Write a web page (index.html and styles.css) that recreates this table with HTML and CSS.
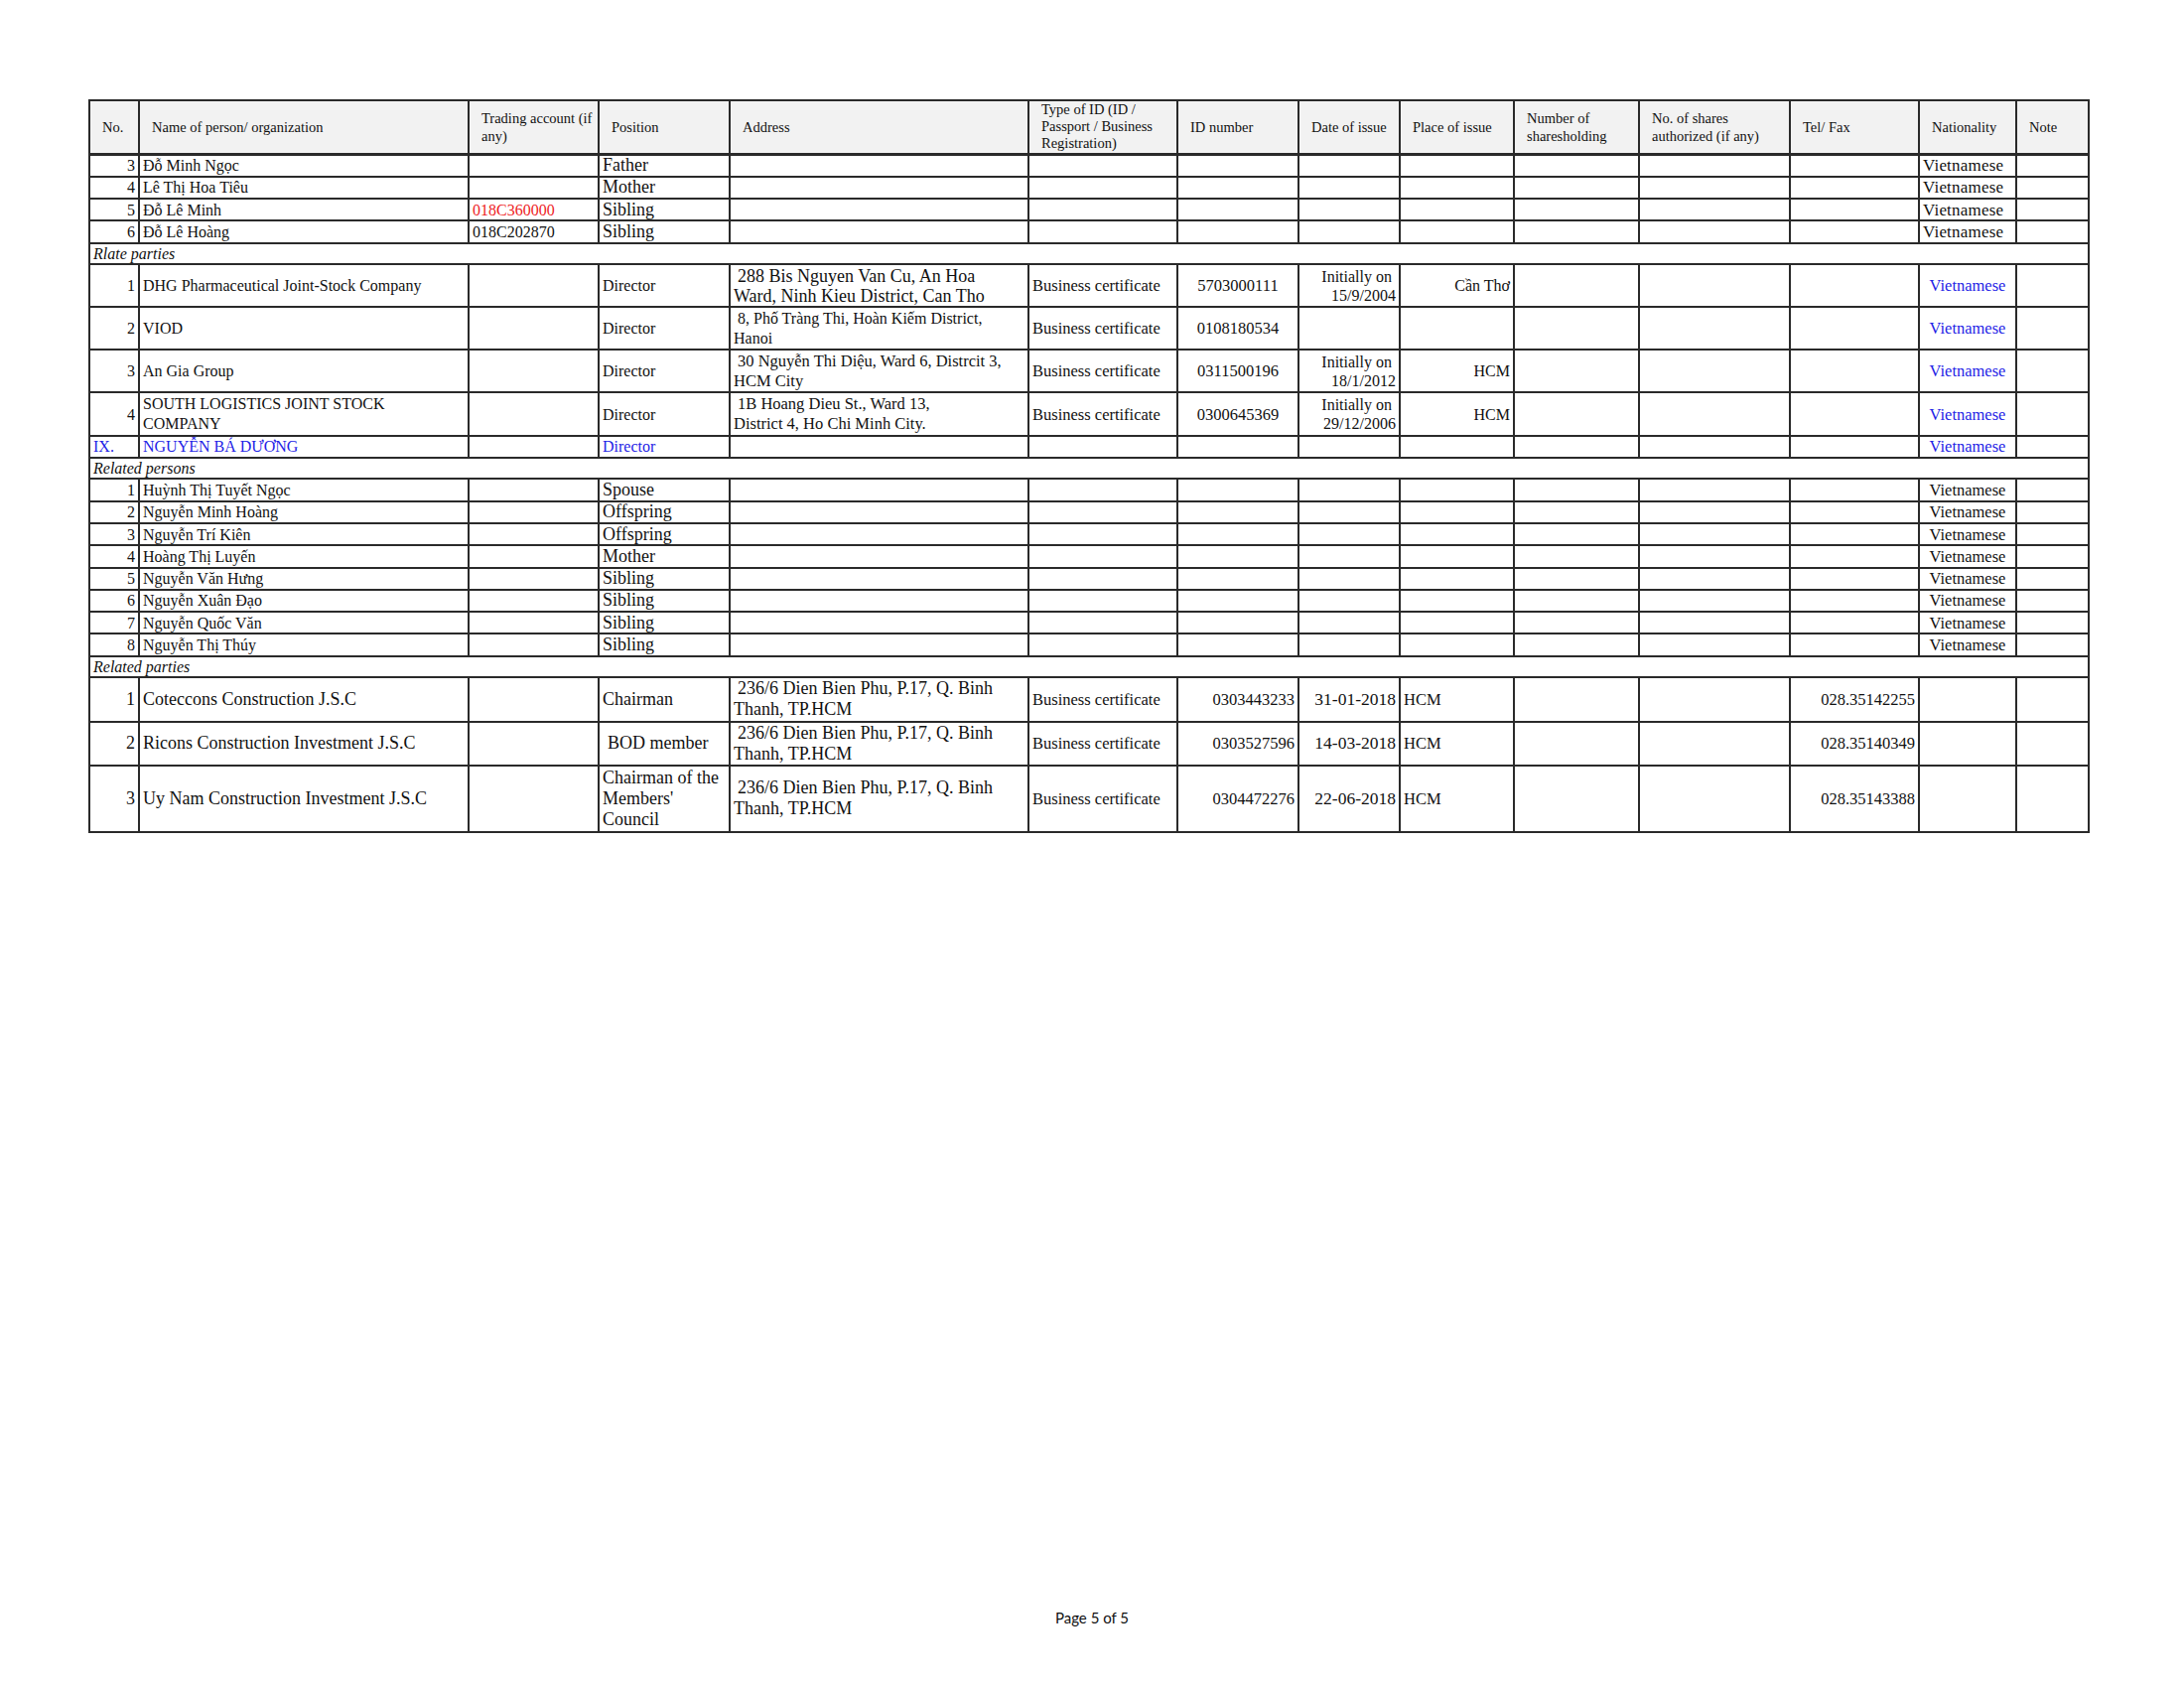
FILE: index.html
```html
<!DOCTYPE html>
<html lang="vi">
<head>
<meta charset="utf-8">
<title>Page 5 of 5</title>
<link rel="stylesheet" href="styles.css">
</head>
<body>
<div class="page">
  <div class="sheet">
    <table class="grid">
      <colgroup>
        <col class="c-no"><col class="c-name"><col class="c-trade"><col class="c-pos"><col class="c-addr"><col class="c-type"><col class="c-id"><col class="c-date"><col class="c-place"><col class="c-num"><col class="c-auth"><col class="c-tel"><col class="c-nat"><col class="c-note">
      </colgroup>
      <thead>
        <tr class="hdr">
          <th>No.</th>
          <th>Name of person/ organization</th>
          <th>Trading account (if any)</th>
          <th>Position</th>
          <th>Address</th>
          <th class="th-tight">Type of ID (ID / Passport / Business Registration)</th>
          <th>ID number</th>
          <th>Date of issue</th>
          <th>Place of issue</th>
          <th>Number of sharesholding</th>
          <th>No. of shares authorized (if any)</th>
          <th>Tel/ Fax</th>
          <th>Nationality</th>
          <th>Note</th>
        </tr>
      </thead>
      <tbody>
        <tr class="r1">
          <td class="no">3</td><td class="nm">Đỗ Minh Ngọc</td><td></td><td class="pos big">Father</td><td></td><td></td><td></td><td></td><td></td><td></td><td></td><td></td><td class="nat-wide">Vietnamese</td><td></td>
        </tr>
        <tr class="r1">
          <td class="no">4</td><td class="nm">Lê Thị Hoa Tiêu</td><td></td><td class="pos big">Mother</td><td></td><td></td><td></td><td></td><td></td><td></td><td></td><td></td><td class="nat-wide">Vietnamese</td><td></td>
        </tr>
        <tr class="r1">
          <td class="no">5</td><td class="nm">Đỗ Lê Minh</td><td class="acct red">018C360000</td><td class="pos big">Sibling</td><td></td><td></td><td></td><td></td><td></td><td></td><td></td><td></td><td class="nat-wide">Vietnamese</td><td></td>
        </tr>
        <tr class="r1">
          <td class="no">6</td><td class="nm">Đỗ Lê Hoàng</td><td class="acct">018C202870</td><td class="pos big">Sibling</td><td></td><td></td><td></td><td></td><td></td><td></td><td></td><td></td><td class="nat-wide">Vietnamese</td><td></td>
        </tr>
        <tr class="rs">
          <td class="sec sec-tight" colspan="14">Rlate parties</td>
        </tr>
        <tr class="r2">
          <td class="no">1</td><td class="nm">DHG Pharmaceutical Joint-Stock Company</td><td></td><td class="pos">Director</td><td class="addr big lh20">288 Bis Nguyen Van Cu, An Hoa<br>Ward, Ninh Kieu District, Can Tho</td><td class="type">Business certificate</td><td class="idc">5703000111</td><td class="date">Initially on&nbsp;<br>15/9/2004</td><td class="place">Cần Thơ</td><td></td><td></td><td></td><td class="nat blue">Vietnamese</td><td></td>
        </tr>
        <tr class="r2">
          <td class="no">2</td><td class="nm">VIOD</td><td></td><td class="pos">Director</td><td class="addr lh20">8, Phố Tràng Thi, Hoàn Kiếm District,<br>Hanoi</td><td class="type">Business certificate</td><td class="idc">0108180534</td><td></td><td></td><td></td><td></td><td></td><td class="nat blue">Vietnamese</td><td></td>
        </tr>
        <tr class="r2">
          <td class="no">3</td><td class="nm">An Gia Group</td><td></td><td class="pos">Director</td><td class="addr mid lh20">30 Nguyễn Thi Diệu, Ward 6, Distrcit 3,<br>HCM City</td><td class="type">Business certificate</td><td class="idc">0311500196</td><td class="date">Initially on&nbsp;<br>18/1/2012</td><td class="place">HCM</td><td></td><td></td><td></td><td class="nat blue">Vietnamese</td><td></td>
        </tr>
        <tr class="r2">
          <td class="no">4</td><td class="nm lh20">SOUTH LOGISTICS JOINT STOCK<br>COMPANY</td><td></td><td class="pos">Director</td><td class="addr mid lh20">1B Hoang Dieu St., Ward 13,<br>District 4, Ho Chi Minh City.</td><td class="type">Business certificate</td><td class="idc">0300645369</td><td class="date">Initially on&nbsp;<br>29/12/2006</td><td class="place">HCM</td><td></td><td></td><td></td><td class="nat blue">Vietnamese</td><td></td>
        </tr>
        <tr class="r1 blue">
          <td class="roman">IX.</td><td class="nm">NGUYỄN BÁ DƯƠNG</td><td></td><td class="pos">Director</td><td></td><td></td><td></td><td></td><td></td><td></td><td></td><td></td><td class="nat">Vietnamese</td><td></td>
        </tr>
        <tr class="rs">
          <td class="sec" colspan="14">Related persons</td>
        </tr>
        <tr class="r1">
          <td class="no">1</td><td class="nm">Huỳnh Thị Tuyết Ngọc</td><td></td><td class="pos big">Spouse</td><td></td><td></td><td></td><td></td><td></td><td></td><td></td><td></td><td class="nat">Vietnamese</td><td></td>
        </tr>
        <tr class="r1">
          <td class="no">2</td><td class="nm">Nguyễn Minh Hoàng</td><td></td><td class="pos big">Offspring</td><td></td><td></td><td></td><td></td><td></td><td></td><td></td><td></td><td class="nat">Vietnamese</td><td></td>
        </tr>
        <tr class="r1">
          <td class="no">3</td><td class="nm">Nguyễn Trí Kiên</td><td></td><td class="pos big">Offspring</td><td></td><td></td><td></td><td></td><td></td><td></td><td></td><td></td><td class="nat">Vietnamese</td><td></td>
        </tr>
        <tr class="r1">
          <td class="no">4</td><td class="nm">Hoàng Thị Luyến</td><td></td><td class="pos big">Mother</td><td></td><td></td><td></td><td></td><td></td><td></td><td></td><td></td><td class="nat">Vietnamese</td><td></td>
        </tr>
        <tr class="r1">
          <td class="no">5</td><td class="nm">Nguyễn Văn Hưng</td><td></td><td class="pos big">Sibling</td><td></td><td></td><td></td><td></td><td></td><td></td><td></td><td></td><td class="nat">Vietnamese</td><td></td>
        </tr>
        <tr class="r1">
          <td class="no">6</td><td class="nm">Nguyễn Xuân Đạo</td><td></td><td class="pos big">Sibling</td><td></td><td></td><td></td><td></td><td></td><td></td><td></td><td></td><td class="nat">Vietnamese</td><td></td>
        </tr>
        <tr class="r1">
          <td class="no">7</td><td class="nm">Nguyễn Quốc Văn</td><td></td><td class="pos big">Sibling</td><td></td><td></td><td></td><td></td><td></td><td></td><td></td><td></td><td class="nat">Vietnamese</td><td></td>
        </tr>
        <tr class="r1">
          <td class="no">8</td><td class="nm">Nguyễn Thị Thúy</td><td></td><td class="pos big">Sibling</td><td></td><td></td><td></td><td></td><td></td><td></td><td></td><td></td><td class="nat">Vietnamese</td><td></td>
        </tr>
        <tr class="rs">
          <td class="sec" colspan="14">Related parties</td>
        </tr>
        <tr class="r2b">
          <td class="no big">1</td><td class="nm big">Coteccons Construction J.S.C</td><td></td><td class="pos big">Chairman</td><td class="addr big lh21">236/6 Dien Bien Phu, P.17, Q. Binh<br>Thanh, TP.HCM</td><td class="type">Business certificate</td><td class="idr">0303443233</td><td class="dater">31-01-2018</td><td class="placel">HCM</td><td></td><td></td><td class="tel">028.35142255</td><td></td><td></td>
        </tr>
        <tr class="r2b">
          <td class="no big">2</td><td class="nm big">Ricons Construction Investment J.S.C</td><td></td><td class="pos big ind">BOD member</td><td class="addr big lh21">236/6 Dien Bien Phu, P.17, Q. Binh<br>Thanh, TP.HCM</td><td class="type">Business certificate</td><td class="idr">0303527596</td><td class="dater">14-03-2018</td><td class="placel">HCM</td><td></td><td></td><td class="tel">028.35140349</td><td></td><td></td>
        </tr>
        <tr class="r3">
          <td class="no big">3</td><td class="nm big">Uy Nam Construction Investment J.S.C</td><td></td><td class="pos big lh21">Chairman of the<br>Members'<br>Council</td><td class="addr big lh21">236/6 Dien Bien Phu, P.17, Q. Binh<br>Thanh, TP.HCM</td><td class="type">Business certificate</td><td class="idr">0304472276</td><td class="dater">22-06-2018</td><td class="placel">HCM</td><td></td><td></td><td class="tel">028.35143388</td><td></td><td></td>
        </tr>
      </tbody>
    </table>
  </div>
  <footer class="footer">Page 5 of 5</footer>
</div>
</body>
</html>
```

FILE: styles.css
```css
html, body {
  margin: 0;
  padding: 0;
  background: #ffffff;
}

.page {
  width: 2200px;
  height: 1700px;
  display: flex;
  flex-direction: column;
  font-family: "Liberation Serif", "Times New Roman", serif;
  color: #111111;
}

.sheet {
  padding: 100px 0 0 89px;
}

.grid {
  border-collapse: collapse;
  table-layout: fixed;
  width: 2015px;
  border: 2px solid #1a1a1a;
  font-size: 16px;
  line-height: 19px;
}

.c-no { width: 50px; }
.c-name { width: 332px; }
.c-trade { width: 131px; }
.c-pos { width: 132px; }
.c-addr { width: 301px; }
.c-type { width: 150px; }
.c-id { width: 122px; }
.c-date { width: 102px; }
.c-place { width: 115px; }
.c-num { width: 126px; }
.c-auth { width: 152px; }
.c-tel { width: 130px; }
.c-nat { width: 98px; }
.c-note { width: 73px; }

.grid th,
.grid td {
  border: 2px solid #2a2a2a;
  padding: 0 3px;
  vertical-align: middle;
  white-space: nowrap;
  overflow: visible;
}

.grid th {
  background: #f2f2f2;
  font-weight: normal;
  font-size: 14.5px;
  line-height: 18px;
  text-align: left;
  padding: 0 3px 0 12px;
  white-space: normal;
  border-bottom-width: 3px;
}

.grid th.th-tight { line-height: 17px; }

.hdr > th { height: 51.5px; }
.r1 > td { height: 20.3px; }
.rs > td { height: 19.5px; }
.r2 > td { height: 41.1px; }
.r2b > td { height: 42.3px; }
.r3 > td { height: 65.3px; }

.big { font-size: 18px; }
.mid { font-size: 16.5px; }

.no {
  text-align: right;
  padding-right: 1px;
}

.roman {
  text-align: left;
  padding-left: 8px;
}

.nm { padding-left: 2px; }

.acct { padding-left: 5px; }

.pos { padding-left: 5px; }
.pos.ind { padding-left: 8px; }

.addr {
  padding-left: 2px;
  text-indent: 4px;
}

.lh20 { line-height: 20px; }
.lh21 { line-height: 21px; }

.type {
  padding-left: 8px;
  font-size: 16.5px;
}

.idc {
  text-align: center;
  padding-right: 8px;
  font-size: 16.5px;
}
.idr {
  text-align: right;
  padding-right: 1px;
  font-size: 16.5px;
}

.date {
  text-align: right;
  line-height: 19px;
  padding-right: 2px;
}
.dater {
  text-align: right;
  padding-right: 2px;
  font-size: 17.5px;
}

.place { text-align: right; padding-right: 1px; }
.placel {
  text-align: left;
  padding-left: 7px;
  font-size: 16.5px;
}

.tel {
  text-align: right;
  padding-right: 1px;
  font-size: 16.5px;
}

.nat {
  text-align: center;
  font-size: 16.5px;
  padding-left: 5px;
}
.nat-wide {
  text-align: left;
  padding-left: 7px;
  font-size: 17px;
  letter-spacing: 0.2px;
}

.sec {
  font-style: italic;
  padding-left: 11px;
}
.sec-tight { padding-left: 2px; }

.red { color: #ee1c25; }
.blue, .blue td { color: #1f24e6; }

.footer {
  margin-top: auto;
  padding-bottom: 61px;
  text-align: center;
  font-family: Lato, "Open Sans", sans-serif;
  font-size: 15px;
  line-height: 20px;
  color: #111111;
}
```
